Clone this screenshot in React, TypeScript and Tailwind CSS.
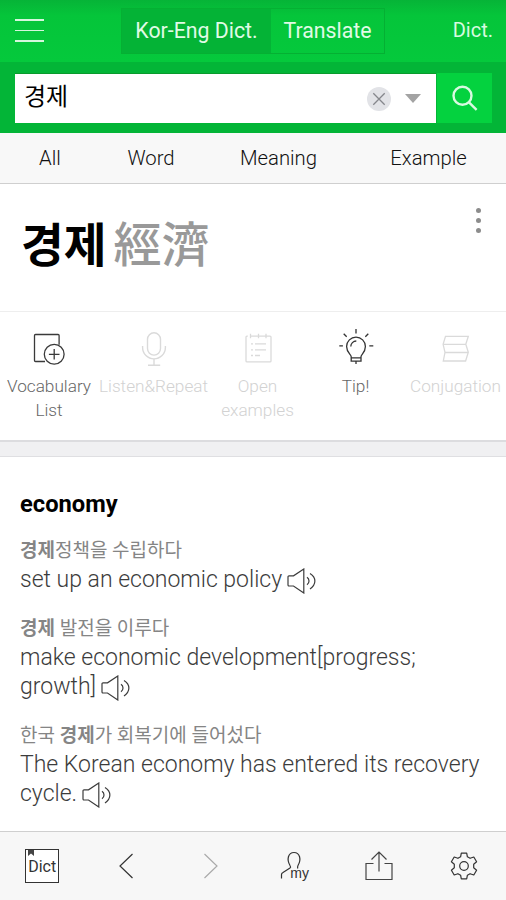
import React from "react";
import clsx from "clsx";

const TABS = [
  { label: "All", width: "w-[100px]" },
  { label: "Word", width: "w-[102px]" },
  { label: "Meaning", width: "w-[153px]" },
  { label: "Example", width: "w-[147px]" },
];

const VocabularyIcon = () => (
  <svg width="36" height="40" viewBox="0 0 36 40" fill="none" stroke="#3a3a3a" strokeWidth="1.3">
    <path d="M14 33.500H4.500a1 1 0 0 1-1-1V7.500a1 1 0 0 1 1-1h22.600a1 1 0 0 1 1 1v9.200" />
    <circle cx="23.200" cy="26.200" r="9.900" />
    <path d="M23.200 21v10.600M17.900 26.300h10.600" />
  </svg>
);

const MicIcon = () => (
  <svg width="36" height="40" viewBox="0 0 36 40" fill="none" stroke="#dadada" strokeWidth="1.4">
    <rect x="11.500" y="4.800" width="13" height="22.300" rx="6.500" />
    <path d="M6.600 18v1.500a11.400 11.400 0 0 0 22.800 0V18M18 31v6M12 37.200h12.200" />
  </svg>
);

const NotesIcon = () => (
  <svg width="36" height="40" viewBox="0 0 36 40" fill="none" stroke="#dadada" strokeWidth="1.3">
    <path d="M7.800 8.100H7a1 1 0 0 0-1 1v23.800a1 1 0 0 0 1 1h23a1 1 0 0 0 1-1V9.100a1 1 0 0 0-1-1H10.500M10.500 5.800v4.500M18.500 5.800v4.500M26 5.800v4.500" />
    <path d="M11 15.800h2M15 15.800h11M11 21.800h2M15 21.800h11M11 27.500h2M15 27.500h5" />
  </svg>
);

const TipIcon = () => (
  <svg width="36" height="40" viewBox="0 0 36 40" fill="none" stroke="#333" strokeWidth="1.3" className="overflow-visible">
    <path d="M13.200 33.200v-4.500c0-2.200-4.600-4-4.600-10.200a9.400 9.400 0 0 1 18.800 0c0 6.200-4.400 8-4.400 10.200v4.500ZM13.200 29.800h9.800M18 33.500v2.500" />
    <path d="M12.800 18.500a5.500 5.500 0 0 1 5.500-5.500" />
    <path d="M18 1v4.400M5.700 5.700l3 3.100M30.300 5.700l-3 3.100M1.300 17.900h3.600M31.300 17.900h4" />
  </svg>
);

const ConjugationIcon = () => (
  <svg width="36" height="40" viewBox="0 0 36 40" fill="none" stroke="#dadada" strokeWidth="1.3">
    <path d="M7.500 8.300H30.300l-2.500 8 2.500 8-2.700 8.700H5.300l1.700-8.700-1.900-8ZM5.100 16.300h22.700M7 24.500h23.300" />
  </svg>
);

const TOOLS = [
  { label: "Vocabulary List", icon: <VocabularyIcon />, width: "w-[98px]", active: true },
  { label: "Listen&Repeat", icon: <MicIcon />, width: "w-[111px]", active: false },
  { label: "Open examples", icon: <NotesIcon />, width: "w-[97px]", active: false },
  { label: "Tip!", icon: <TipIcon />, width: "w-[99px]", active: true },
  { label: "Conjugation", icon: <ConjugationIcon />, width: "w-[101px]", active: false },
];

const SpeakerIcon = () => (
  <svg width="30" height="26" viewBox="0 0 30 26" fill="none" stroke="#3c3c3c" strokeWidth="1.2" className="ml-[5px] inline-block align-[-7px]">
    <path d="M1 8.800a1 1 0 0 1 1-1h4.500L16.800 1v24L6.500 18H2a1 1 0 0 1-1-1Z" />
    <path d="M20 9.300a4.500 4.500 0 0 1 0 7.500M23 5.500c6.500 4 6.500 11 0 15.500" />
  </svg>
);

interface ExampleProps {
  korean: React.ReactNode;
  english: React.ReactNode;
  className?: string;
}

const Example: React.FC<ExampleProps> = ({ korean, english, className }) => (
  <li className={className}>
    <p className="h-[29px] text-[19px] leading-[29px] text-[#858585]">{korean}</p>
    <p className="text-[23px] leading-[29px] font-light text-[#3c3c3c]">
      {english}
      <SpeakerIcon />
    </p>
  </li>
);

const Header = () => (
  <header>
    <div className="flex h-[62px] items-start bg-linear-to-b from-[#06b437] via-[#05c53a] via-25% to-[#05c93c]">
      <button className="mt-[19px] ml-[15px] flex w-[29px] flex-col gap-[9px]">
        <span className="h-[1.5px] bg-[#d5f7dd]" />
        <span className="h-[1.5px] bg-[#d5f7dd]" />
        <span className="h-[1.5px] bg-[#d5f7dd]" />
      </button>
      <div className="mt-[8px] ml-[77px] flex h-[46px] w-[264px] border border-[#05b033] text-[21.3px] text-[#e0fbe6]">
        <button className="w-[149px] bg-[#04b336]">Kor-Eng Dict.</button>
        <button className="flex-1">Translate</button>
      </div>
      <a className="mt-[15px] mr-[13px] ml-auto text-[20px] leading-[30px] text-[#d8fbe0]">Dict.</a>
    </div>
    <div className="flex h-[71px] bg-[#03b537] pt-[11px] pl-[15px]">
      <div className="flex h-[50px] w-[421px] items-center border-t border-[#0a9a2c] bg-white pl-[9px]">
        <span className="pb-[3px] text-[24px] leading-[46px] text-black">경제</span>
        <button className="ml-auto">
          <svg width="24" height="24" viewBox="0 0 24 24" stroke="#85878c" strokeWidth="1.300">
            <circle cx="12" cy="12" r="12" fill="#e2e3e7" stroke="none" />
            <path d="m6.300 6.300 11.400 11.400M17.700 6.300 6.300 17.700" />
          </svg>
        </button>
        <svg width="16" height="9" viewBox="0 0 16 9" className="mr-[15px] ml-[14px]">
          <path d="M0 0h16L8 9Z" fill="#a3a3a3" />
        </svg>
      </div>
      <button className="ml-px flex h-[50px] w-[55px] items-center justify-center bg-[#04d23f]">
        <svg width="26" height="26" viewBox="0 0 26 26" fill="none" stroke="#d9fae1" strokeWidth="2.400">
          <circle cx="10.500" cy="10.800" r="9" />
          <path d="m17 17.300 7.600 7.600" />
        </svg>
      </button>
    </div>
  </header>
);

const BottomBar = () => (
  <footer className="grid h-[69px] grid-cols-6 place-items-center border-t border-[#cfcfcf] bg-[#f7f7f7]">
    <button className="relative flex h-[34px] w-[34px] items-center justify-center border border-[#333] bg-white pt-[2px] text-[16px] text-[#333]">
      <svg width="6" height="6" viewBox="0 0 6 6" className="absolute top-0 left-[2px]">
        <path d="M0 0h6v6L3 3.500 0 6Z" fill="#444" />
      </svg>
      Dict
    </button>
    <svg width="14" height="26" viewBox="0 0 14 26" fill="none" stroke="#333" strokeWidth="1.200">
      <path d="M13.500 1 1 13l12.500 12" />
    </svg>
    <svg width="14" height="26" viewBox="0 0 14 26" fill="none" stroke="#aaa" strokeWidth="1.200">
      <path d="M.5 1 13 13 .5 25" />
    </svg>
    <svg width="30" height="30" viewBox="0 0 30 30" fill="none" stroke="#333" strokeWidth="1.200">
      <path d="M1.500 27.500v-4c0-1 .5-1.500 1.500-2l7-4.500c1-.7.700-1.500 0-2.500C6.500 8.500 8 1.500 14 1.500s7.500 7 4 13c-.6 1-.6 1.800-.2 3" />
      <text x="10.300" y="26.500" fontSize="14" fill="#333" stroke="none" fontFamily="Liberation Sans, sans-serif">my</text>
    </svg>
    <svg width="28" height="30" viewBox="0 0 28 30" fill="none" stroke="#444" strokeWidth="1.200">
      <path d="M8.500 12.500H1v16h26v-16h-7.500M14 20.500V1M6.500 8.500 14 1l7.500 7.500" />
    </svg>
    <svg width="28" height="28" viewBox="0 0 28 28" fill="none" stroke="#333" strokeWidth="1.200">
      <circle cx="14" cy="14" r="4.300" />
      <path d="M11.300 1.200h5.400l.7 3.600 2.700 1.500 3.700-1.300 2.800 4.700-2.900 2.500v3.600l2.900 2.500-2.800 4.700-3.700-1.300-2.700 1.500-.7 3.600h-5.400l-.7-3.600-2.700-1.500-3.700 1.300-2.800-4.700 2.900-2.500v-3.600L1.400 9.700 4.200 5l3.700 1.300 2.700-1.500Z" strokeLinejoin="round" />
    </svg>
  </footer>
);

export default function App() {
  return (
    <div className="flex h-[900px] w-[506px] flex-col overflow-hidden bg-white font-[Roboto,'Noto_Sans_CJK_KR',sans-serif]">
      <Header />
      <nav className="flex h-[51px] border-b border-[#cfcfcf] bg-[#f8f8f8]">
        {TABS.map((tab) => (
          <button key={tab.label} className={clsx(tab.width, "text-[20.3px] font-light text-[#111]")}>
            {tab.label}
          </button>
        ))}
      </nav>
      <section className="flex h-[128px] items-start justify-between border-b border-[#eee] pl-[21px]">
        <h1 className="mt-[27px] flex items-center leading-[70px]">
          <span className="text-[46.500px] font-bold text-black">경제</span>
          <span className="ml-[7px] text-[48px] font-medium text-[#999]">經濟</span>
        </h1>
        <button className="mt-[24px] mr-[25px] flex flex-col gap-[5px]">
          <span className="size-[5px] rounded-full bg-[#8c8c8c]" />
          <span className="size-[5px] rounded-full bg-[#8c8c8c]" />
          <span className="size-[5px] rounded-full bg-[#8c8c8c]" />
        </button>
      </section>
      <section className="flex h-[128px] pt-[16px]">
        {TOOLS.map((tool) => (
          <button key={tool.label} className={clsx(tool.width, "flex flex-col items-center")}>
            {tool.icon}
            <span className={clsx("mt-[6px] text-[17.2px] leading-[24px] font-light", tool.active ? "text-[#666]" : "text-[#d2d2d2]")}>
              {tool.label}
            </span>
          </button>
        ))}
      </section>
      <div className="h-[17px] shrink-0 border-t-2 border-b border-t-[#dcdcdf] border-b-[#dfdfe2] bg-[#f0f0f2]" />
      <main className="flex-1 px-[20px] pt-[31px]">
        <h2 className="text-[23.7px] leading-[33px] font-bold text-black">economy</h2>
        <ul className="whitespace-nowrap">
          <Example className="mt-[15px]" korean={<><b>경제</b>정책을 수립하다</>} english="set up an economic policy" />
          <Example className="mt-[20px]" korean={<><b>경제</b> 발전을 이루다</>} english={<>make economic development[progress;<br />growth]</>} />
          <Example className="mt-[20px]" korean={<>한국 <b>경제</b>가 회복기에 들어섰다</>} english={<>The Korean economy has entered its recovery<br />cycle.</>} />
        </ul>
      </main>
      <BottomBar />
    </div>
  );
}
